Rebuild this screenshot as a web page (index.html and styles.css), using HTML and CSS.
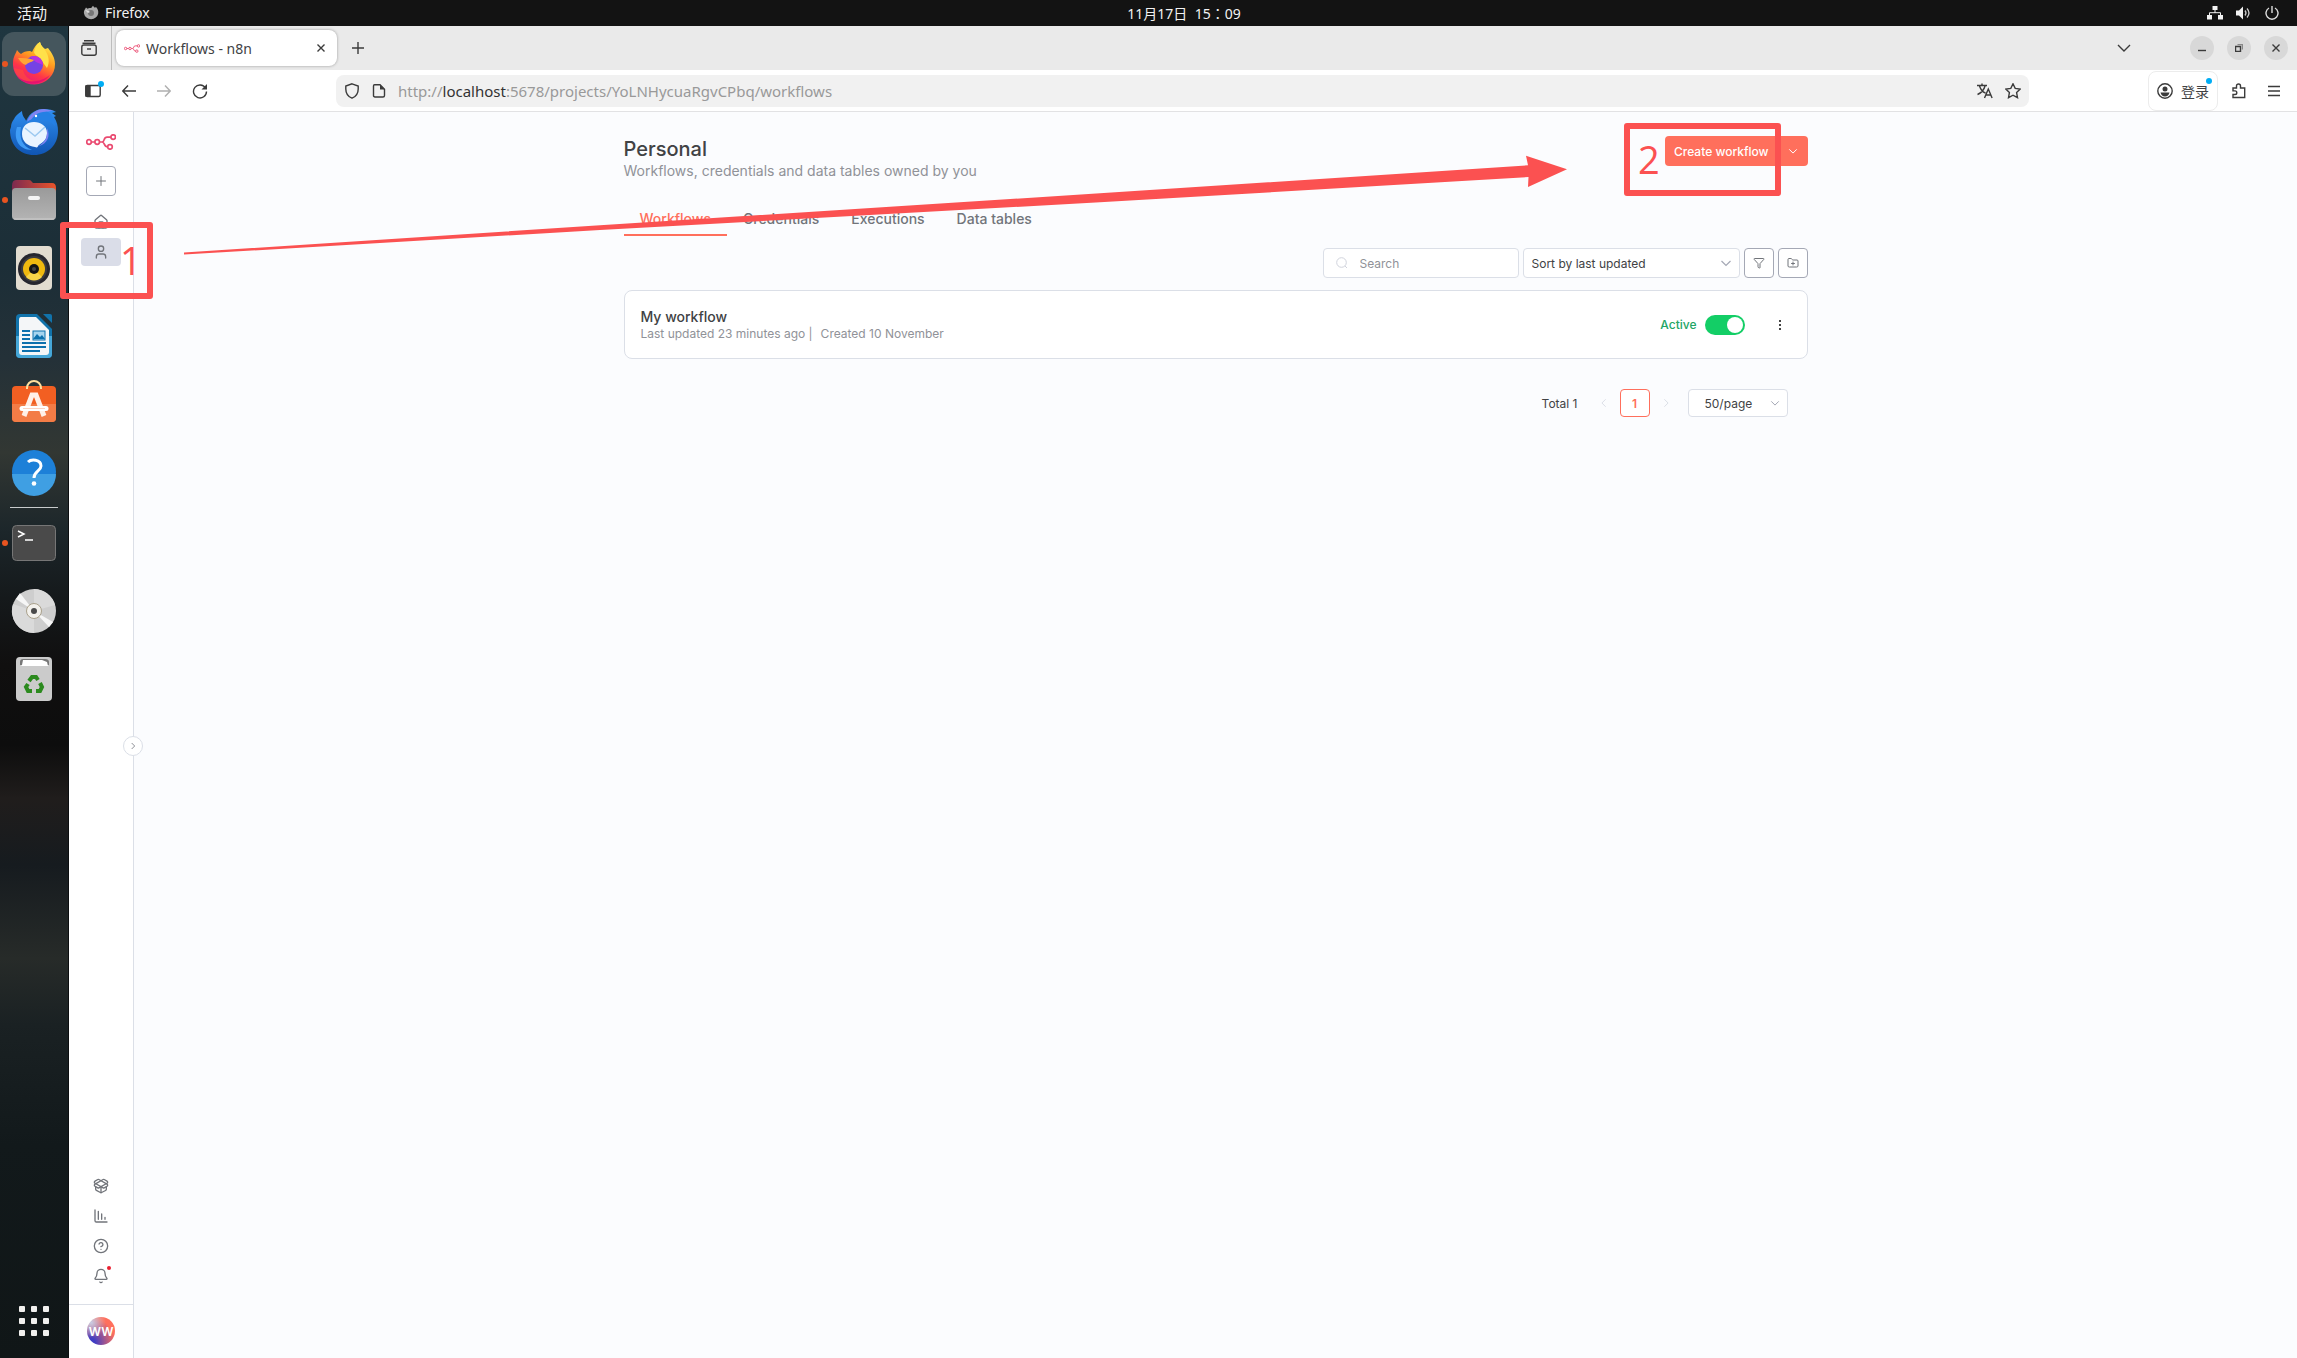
FILE: index.html
```html
<!DOCTYPE html>
<html lang="en">
<head>
    <meta charset="UTF-8">
    <meta name="viewport" content="width=device-width, initial-scale=1.0">
    <title>Workflows - n8n</title>
    <link rel="stylesheet" href="styles.css">
</head>
<body>
    <!-- Shared shapes -->
    <svg class="defs" width="0" height="0" aria-hidden="true">
        <symbol id="n8n" viewBox="0 0 30 16">
            <g fill="none" stroke="#ea4b71" stroke-width="1.7">
                <circle cx="3" cy="8" r="2.3"/><circle cx="11.2" cy="8" r="2.3"/>
                <circle cx="27.2" cy="3.1" r="2.3"/><circle cx="24" cy="12.9" r="2.3"/>
                <path d="M5.3 8h3.6M13.5 8h2.6c3 0 1-4.9 5-4.9h3.8M16.1 8c3 0 1.4 4.9 5.6 4.9"/>
            </g>
        </symbol>
        <symbol id="chevron" viewBox="0 0 24 24">
            <path d="m3 8 9 9 9-9" fill="none" stroke="currentColor" stroke-width="2.4"/>
        </symbol>
        <linearGradient id="fox" x1="0.8" y1="0" x2="0.3" y2="1">
            <stop offset="0" stop-color="#fff44f"/><stop offset="0.4" stop-color="#ff9a1f"/>
            <stop offset="0.7" stop-color="#ff3647"/><stop offset="1" stop-color="#e31587"/>
        </linearGradient>
        <linearGradient id="bird" x1="0" y1="0" x2="0" y2="1">
            <stop offset="0" stop-color="#2f8ff0"/><stop offset="1" stop-color="#1055b3"/>
        </linearGradient>
        <linearGradient id="steel" x1="0" y1="0" x2="0" y2="1">
            <stop offset="0" stop-color="#9a9a9a"/><stop offset="1" stop-color="#b4b4b4"/>
        </linearGradient>
        <linearGradient id="folder" x1="0" y1="0" x2="1" y2="0">
            <stop offset="0" stop-color="#7c2a50"/><stop offset="1" stop-color="#e9542a"/>
        </linearGradient>
    </svg>

    <header class="topbar">
        <div class="topbar-left">
            <span class="activities">活动</span>
            <span class="app-name">
                <svg width="16" height="16" viewBox="0 0 16 16"><path d="M1.5 5 3 2.5l1.5 1.3C6 3 7.500 3 8.200 3L10 .8l1.300 1.700 2-.3C15 4 15.500 6 15.200 8.500a7.200 6.800 0 0 1-14.200 0C.8 7 1 6 1.500 5z" fill="#aaa"/><circle cx="8" cy="8" r="3" fill="#777"/><path d="M2 5c2 0 4 1 5 2L5 8z" fill="#ddd"/></svg>
                Firefox
            </span>
        </div>
        <time class="clock">11月17日&nbsp; 15：09</time>
        <div class="topbar-right">
            <svg width="16" height="14" viewBox="0 0 16 14"><path d="M5.500 0h5v4h-5zM0 9h5v4.500H0zM11 9h5v4.500h-5z" fill="#f2f2f2"/><path d="M8 4v3M2.500 9V6.700h11V9" fill="none" stroke="#f2f2f2"/></svg>
            <svg width="16" height="14" viewBox="0 0 16 14"><path d="M0 4.500h3L7 .5v13L3 9.500H0z" fill="#f2f2f2"/><path d="M9 4.500q2 2.500 0 5M11 2.500q4 4.500 0 9" fill="none" stroke="#ccc" stroke-width="1.300"/></svg>
            <svg width="14" height="14" viewBox="0 0 14 14"><path d="M7 0v7M4 2a6 6 0 1 0 6 0" fill="none" stroke="#ddd" stroke-width="1.400"/></svg>
        </div>
    </header>

    <div class="desktop">
        <nav class="dock" aria-label="Dock">
            <button class="dock-item focused running" aria-label="Firefox">
                <svg width="48" height="48" viewBox="0 0 48 48">
                    <path d="M4 17c1-3 2-4 3-7 1 1 2 3 4 4 2-2 5-3 9-3l2 1c2-4 4-8 8-10 1 4 3 5 5 7l3-1c4 5 7 10 7 16a21 20 0 0 1-42 1c0-3 0-6 1-8z" fill="url(#fox)"/>
                    <path d="M30 2c1 4 3 5 5 8 4 6 5 12 2 18l-6-8c-3-5-6-4-7-8 1-4 3-8 6-10z" fill="#ffe14a"/>
                    <circle cx="24" cy="25" r="9" fill="#7542e5"/><path d="M20 17c6-3 13 1 13 8l-7-3z" fill="#b833e1"/>
                    <path d="M8 18c5 0 10 0 16 2-3 3-6 2-8 5-4-1-6-4-8-7z" fill="#ffa436"/>
                    <path d="M4 28c2 11 13 16 24 13-7 0-13-3-15-11z" fill="#ff4a3a" opacity=".7"/>
                    <path d="M7 37c9 9 25 9 33-2-7 6-21 10-33 2z" fill="#e5126f"/>
                </svg>
            </button>
            <button class="dock-item" aria-label="Thunderbird">
                <svg width="48" height="48" viewBox="0 0 48 48">
                    <path d="M1 19c0-3 1-5 3-8 1-3 4-5 8-8 0 6 4 8 4 10C20 4 27 1 34 1c5 0 9 1 12 3l-4 1 4 3-2 1c3 5 4 9 4 14 0 14-10 24-24 24S0 37 0 22z" fill="url(#bird)"/>
                    <path d="M17 14C20 5 27 1 34 1l10 2c-8 0-13 2-16 6-4 2-8 2-11 5z" fill="#7f83f2"/>
                    <path d="M20 14c3-7 10-11 18-10 4 2 7 8 7 14-5-6-15-8-25-4z" fill="#2480e4"/>
                    <path d="M7 19C3 31 9 42 22 42 12 38 9 30 11 19z" fill="#3f9cf6"/>
                    <path d="M12 26c0-8 5-12 12-12s13 4 13 11c0 9-7 10-9 13 0 1-1 2-3 1-7-1-13-5-13-13z" fill="#e9f4ff"/>
                    <path d="m15 20 10 8 10-9" fill="none" stroke="#9cc9f0" stroke-width="1.500"/><circle cx="26" cy="8" r="1.200" fill="#fff"/>
                    <path d="M37 20c4 8 0 16-8 18l-3 1c9-3 12-10 11-19z" fill="#7f83f2"/>
                </svg>
            </button>
            <button class="dock-item running" aria-label="Files">
                <svg width="48" height="48" viewBox="0 0 48 48">
                    <path d="M2 10q0-6 4-6h13q2 0 3 2l1 1h19q4 0 4 5v14H2z" fill="url(#folder)"/>
                    <rect x="2" y="12" width="44" height="32" rx="4" fill="url(#steel)"/>
                    <path d="M4 43h40" stroke="#ccc"/><rect x="18" y="20" width="12" height="4" rx="2" fill="#f4f4f4"/>
                </svg>
            </button>
            <button class="dock-item" aria-label="Rhythmbox">
                <svg width="48" height="48" viewBox="0 0 48 48">
                    <rect x="6" y="2" width="36" height="44" rx="4" fill="#e2dcd0"/>
                    <circle cx="24" cy="25" r="16" fill="#26262e"/><circle cx="24" cy="25" r="13" fill="#3b3b40"/>
                    <circle cx="24" cy="25" r="11" fill="#f0b90f"/><path d="M24 25 16 33a11 11 0 0 0 16 0z" fill="#f8d548"/>
                    <circle cx="24" cy="25" r="5" fill="#141414"/><circle cx="24" cy="25" r="2" fill="#444"/>
                </svg>
            </button>
            <button class="dock-item" aria-label="LibreOffice Writer">
                <svg width="48" height="48" viewBox="0 0 48 48">
                    <path d="M10 2h17l15 15v25q0 4-4 4H10q-4 0-4-4V6q0-4 4-4z" fill="#1173ab"/><path d="M6 24h36v18q0 4-4 4H10q-4 0-4-4z" fill="#46a7d8"/>
                    <path d="M33 2h7q2 0 2 2v7z" fill="#1173ab"/>
                    <path d="M11 5h15l13 13v22q0 3-3 3H12q-3 0-3-3V8q0-3 2-3z" fill="#f4f6f8"/>
                    <path d="M12 19h8M12 23h8M12 27h8M12 31h24M12 35h24M12 39h18" stroke="#0c70ad" stroke-width="2"/>
                    <rect x="23" y="19" width="12" height="9" fill="#a6d4ef" stroke="#0c70ad"/><path d="m23 27 4-5 3 3 2-2 3 4z" fill="#0c70ad"/>
                </svg>
            </button>
            <button class="dock-item" aria-label="App Center">
                <svg width="48" height="48" viewBox="0 0 48 48">
                    <rect x="2" y="6" width="44" height="36" rx="4" fill="#f25f22"/><path d="M2 24h44v14q0 4-4 4H6q-4 0-4-4z" fill="#f37c46"/>
                    <path d="M17 9V8a7 7 0 0 1 14 0v1" fill="none" stroke="#ffdf9e" stroke-width="2"/>
                    <path d="m14 36 8-21h4l8 21" fill="none" stroke="#fff0e8" stroke-width="5"/><path d="M12 28.500h24" stroke="#fff" stroke-width="5" stroke-linecap="round"/><path d="M13 28.500h22" stroke="#fbd3c2"/>
                </svg>
            </button>
            <button class="dock-item" aria-label="Help">
                <svg width="48" height="48" viewBox="0 0 48 48">
                    <circle cx="24" cy="24" r="22" fill="#1d80d8"/><path d="M2 26a22 22 0 0 0 44 0z" fill="#3f9fe3"/>
                    <path d="M18 14c3-3 13-3 13 4 0 5-7 5-7 12" fill="none" stroke="#fff" stroke-width="3"/><circle cx="24" cy="35.500" r="2.300" fill="#fff"/>
                </svg>
            </button>
            <hr class="dock-line">
            <button class="dock-item running" aria-label="Terminal">
                <svg width="48" height="48" viewBox="0 0 48 48">
                    <rect x="2.500" y="6.500" width="43" height="35" rx="4" fill="#4a4a4a" stroke="#767676"/>
                    <path d="m8 12 6 3-6 3M15 21h8" fill="none" stroke="#fff" stroke-width="1.500"/>
                </svg>
            </button>
            <button class="dock-item" aria-label="Disc">
                <svg width="48" height="48" viewBox="0 0 48 48">
                    <circle cx="24" cy="24" r="22" fill="#cecece"/>
                    <path d="M24 24 3 17A22 22 0 0 0 24 46zM24 24l21-6A22 22 0 0 0 24 2z" fill="#dadada"/>
                    <path d="m24 24-18-12 4-6zM24 24l19 11-4 5z" fill="#f6f6f6"/>
                    <circle cx="24" cy="24" r="7.500" fill="#f3f1ec" stroke="#aaa18c"/><circle cx="24" cy="24" r="3" fill="#4a4a4a"/>
                </svg>
            </button>
            <button class="dock-item" aria-label="Trash">
                <svg width="48" height="48" viewBox="0 0 48 48">
                    <rect x="6" y="2" width="36" height="44" rx="4" fill="#cbcbcb"/>
                    <path d="M10 10V7q0-3 3-3h22q4 0 4 3v3z" fill="#777"/><path d="m12 10 1-5h19l5 2 1 4H11z" fill="#fff"/>
                    <g fill="none" stroke="#2b8a1e" stroke-width="4"><path d="m19 26 3-4h4l2 3"/><path d="m30 28 2 4-2 4h-4"/><path d="M22 36h-4l-2-4 2-3"/></g>
                </svg>
            </button>
            <button class="apps-grid" aria-label="Show applications">
                <svg width="30" height="30" viewBox="0 0 30 30" fill="#f1f0ee">
                    <rect width="6" height="6" rx="1"/><rect x="12" width="6" height="6" rx="1"/><rect x="24" width="6" height="6" rx="1"/>
                    <rect y="12" width="6" height="6" rx="1"/><rect x="12" y="12" width="6" height="6" rx="1"/><rect x="24" y="12" width="6" height="6" rx="1"/>
                    <rect y="24" width="6" height="6" rx="1"/><rect x="12" y="24" width="6" height="6" rx="1"/><rect x="24" y="24" width="6" height="6" rx="1"/>
                </svg>
            </button>
        </nav>

        <div class="browser">
            <div class="tabbar">
                <button class="tab-overview" aria-label="Recent browsing">
                    <svg class="ico" width="16" height="16" viewBox="0 0 16 16"><path d="M3 .8h10M1.500 3.200h13" /><rect x=".8" y="5" width="14.400" height="10.200" rx="2"/><path d="M6 9h4"/></svg>
                </button>
                <div class="tab">
                    <svg width="16" height="9"><use href="#n8n"/></svg>
                    <span class="tab-title">Workflows - n8n</span>
                    <button class="tab-close" aria-label="Close tab"><svg class="ico" width="8" height="8" viewBox="0 0 8 8"><path d="m.5.5 7 7M7.500.5l-7 7"/></svg></button>
                </div>
                <button class="new-tab" aria-label="New tab"><svg class="ico" width="12" height="12" viewBox="0 0 12 12"><path d="M6 0v12M0 6h12"/></svg></button>
                <div class="window-buttons">
                    <button class="all-tabs" aria-label="List all tabs"><svg class="ico" width="14" height="14" viewBox="0 0 14 14"><path d="m1 4 6 6 6-6"/></svg></button>
                    <button class="round" aria-label="Minimize"><svg class="ico" width="8" height="8" viewBox="0 0 8 8"><path d="M0 6.500h8"/></svg></button>
                    <button class="round" aria-label="Restore"><svg class="ico" width="8" height="8" viewBox="0 0 8 8"><path d="M.5 2.500h5v5h-5z"/><path d="M2.500.5h5v5" stroke="#888"/></svg></button>
                    <button class="round" aria-label="Close"><svg class="ico" width="8" height="8" viewBox="0 0 8 8"><path d="m.5.5 7 7M7.500.5l-7 7"/></svg></button>
                </div>
            </div>

            <div class="navbar">
                <div class="nav-buttons">
                    <button class="dotted" aria-label="Sidebar"><svg class="ico" width="16" height="14" viewBox="0 0 16 14"><rect x=".8" y="1.500" width="14.400" height="11" rx="1.500"/><path d="M1 2h4v10H1z" fill="#3b3b3b"/></svg></button>
                    <button aria-label="Back"><svg class="ico" width="14" height="12" viewBox="0 0 14 12"><path d="M6 .5.800 6 6 11.500M1 6h13"/></svg></button>
                    <button class="disabled" aria-label="Forward"><svg class="ico" width="14" height="12" viewBox="0 0 14 12"><path d="M8 .5 13.200 6 8 11.500M13 6H0"/></svg></button>
                    <button aria-label="Reload"><svg class="ico" width="16" height="16" viewBox="0 0 16 16"><path d="M13.500 5A6.500 6.500 0 1 0 14.500 8.500"/><path d="M15 1v5.500H9.500z" fill="#3b3b3b" stroke="none"/></svg></button>
                </div>
                <div class="urlbar">
                    <svg class="ico" width="16" height="16" viewBox="0 0 16 16"><path d="M8 .8 14.200 3v3c0 4-2 7.500-6.200 9.200C3.800 13.500 1.800 10 1.800 6V3z"/></svg>
                    <svg class="ico" width="14" height="16" viewBox="0 0 14 16"><path d="M2.500 1.800H8l4.500 4.500v6.200q0 1.500-1.500 1.500H3q-1.500 0-1.500-1.500V3q0-1.200 1-1.200z"/><path d="M8 1.500v5h5z" fill="#3b3b3b" stroke="none"/></svg>
                    <span class="url">http://<b>localhost</b>:5678/projects/YoLNHycuaRgvCPbq/workflows</span>
                    <button aria-label="Translate"><svg class="ico" width="16" height="16" viewBox="0 0 16 16"><path d="M0 2.500h10M5 .5v2M2.500 3c1 3 3 6 6 7M8 3C7 7 4 10 .5 11.500M7.500 15l3.800-9 3.800 9M9 12h5"/></svg></button>
                    <button aria-label="Bookmark"><svg class="ico" width="16" height="16" viewBox="0 0 16 16"><path d="m8 .8 2.200 4.600 5 .7-3.600 3.500.9 5L8 12.200l-4.500 2.400.9-5L.8 6.100l5-.7z"/></svg></button>
                </div>
                <div class="nav-end">
                    <button class="signin dotted"><svg class="ico" width="16" height="16" viewBox="0 0 16 16"><circle cx="8" cy="8" r="7.200"/><circle cx="8" cy="6" r="2.500" fill="#3b3b3b" stroke="none"/><path d="M3.500 9.500h9q-1 4-4.500 4t-4.500-4z" fill="#3b3b3b" stroke="none"/></svg>登录</button>
                    <button aria-label="Extensions"><svg class="ico" width="14" height="16" viewBox="0 0 14 16"><path d="M1 5h3.500V3a2 2 0 0 1 4 0v2h4.200v9.500H1V11.500h2a1.800 1.800 0 0 0 0-3.600H1z"/></svg></button>
                    <button aria-label="Menu"><svg class="ico" width="12" height="12" viewBox="0 0 12 12"><path d="M0 1.500h12M0 6h12M0 10.500h12"/></svg></button>
                </div>
            </div>

            <div class="app">
                <aside class="sidebar">
                    <a class="logo" href="#" aria-label="n8n"><svg width="30" height="16"><use href="#n8n"/></svg></a>
                    <button class="add" aria-label="Create"><svg class="lucide" width="12" height="12" viewBox="0 0 24 24"><path d="M12 3v18M3 12h18"/></svg></button>
                    <nav class="menu">
                        <a class="menu-item" href="#" aria-label="Overview"><svg class="lucide" width="16" height="16" viewBox="0 0 24 24"><path d="M15 21v-8a1 1 0 0 0-1-1h-4a1 1 0 0 0-1 1v8"/><path d="M3 10a2 2 0 0 1 .709-1.528l7-5.999a2 2 0 0 1 2.582 0l7 5.999A2 2 0 0 1 21 10v9a2 2 0 0 1-2 2H5a2 2 0 0 1-2-2z"/></svg></a>
                        <a class="menu-item selected" href="#" aria-label="Personal"><svg class="lucide" width="16" height="16" viewBox="0 0 24 24"><path d="M19 21v-2a4 4 0 0 0-4-4H9a4 4 0 0 0-4 4v2"/><circle cx="12" cy="7" r="4"/></svg></a>
                    </nav>
                    <nav class="menu menu-bottom">
                        <a class="menu-item" href="#" aria-label="Templates"><svg class="lucide" width="16" height="16" viewBox="0 0 24 24"><path d="M12 22v-9"/><path d="M15.170 2.210a1.670 1.670 0 0 1 1.630 0L21 4.570a1.930 1.930 0 0 1 0 3.360L8.820 14.790a1.655 1.655 0 0 1-1.640 0L3 12.430a1.930 1.930 0 0 1 0-3.360z"/><path d="M20 13v3.870a2.060 2.060 0 0 1-1.110 1.830l-6 3.080a1.930 1.930 0 0 1-1.780 0l-6-3.080A2.060 2.060 0 0 1 4 16.870V13"/><path d="M21 12.430a1.930 1.930 0 0 0 0-3.360L8.830 2.200a1.640 1.640 0 0 0-1.630 0L3 4.570a1.930 1.930 0 0 0 0 3.360l12.180 6.860a1.636 1.636 0 0 0 1.630 0z"/></svg></a>
                        <a class="menu-item" href="#" aria-label="Insights"><svg class="lucide" width="16" height="16" viewBox="0 0 24 24"><path d="M13 17V9M18 17v-3M3 3v16a2 2 0 0 0 2 2h16M8 17V5"/></svg></a>
                        <a class="menu-item" href="#" aria-label="Help"><svg class="lucide" width="16" height="16" viewBox="0 0 24 24"><circle cx="12" cy="12" r="10"/><path d="M9.090 9a3 3 0 0 1 5.830 1c0 2-3 3-3 3M12 17h.01"/></svg></a>
                        <a class="menu-item news" href="#" aria-label="What's new"><svg class="lucide" width="16" height="16" viewBox="0 0 24 24"><path d="M10.268 21a2 2 0 0 0 3.464 0"/><path d="M3.262 15.326A1 1 0 0 0 4 17h16a1 1 0 0 0 .74-1.673C19.410 13.956 18 12.499 18 8A6 6 0 0 0 6 8c0 4.499-1.411 5.956-2.738 7.326"/></svg></a>
                    </nav>
                    <div class="user"><span class="avatar">WW</span></div>
                    <button class="collapse" aria-label="Expand sidebar"><svg width="8" height="8"><use href="#chevron"/></svg></button>
                </aside>

                <main class="main">
                    <div class="page">
                        <div class="page-head">
                            <div>
                                <h1>Personal</h1>
                                <p class="subtitle">Workflows, credentials and data tables owned by you</p>
                            </div>
                            <div class="create">
                                <button class="create-main">Create workflow</button>
                                <button class="create-more" aria-label="More options"><svg width="10" height="10"><use href="#chevron"/></svg></button>
                            </div>
                        </div>

                        <nav class="tabs">
                            <a class="active" href="#">Workflows</a>
                            <a href="#">Credentials</a>
                            <a href="#">Executions</a>
                            <a href="#">Data tables</a>
                        </nav>

                        <div class="filters">
                            <label class="search">
                                <svg width="12" height="12" viewBox="0 0 12 12" fill="none" stroke="#d0d3dc"><circle cx="5.500" cy="5.500" r="4.800"/><path d="m9 9 2 2"/></svg>
                                <input type="text" placeholder="Search" aria-label="Search">
                            </label>
                            <div class="select sort">
                                <select aria-label="Sort"><option>Sort by last updated</option></select>
                                <svg width="12" height="12"><use href="#chevron"/></svg>
                            </div>
                            <button class="square" aria-label="Filter"><svg class="lucide" width="12" height="12" viewBox="0 0 24 24"><path d="M10 20a1 1 0 0 0 .553.895l2 1A1 1 0 0 0 14 21v-7a2 2 0 0 1 .517-1.341L21.740 4.670A1 1 0 0 0 21 3H3a1 1 0 0 0-.742 1.670l7.225 7.989A2 2 0 0 1 10 14z"/></svg></button>
                            <button class="square" aria-label="Add folder"><svg class="lucide" width="12" height="12" viewBox="0 0 24 24"><path d="M12 10v6M9 13h6"/><path d="M20 20a2 2 0 0 0 2-2V8a2 2 0 0 0-2-2h-7.900a2 2 0 0 1-1.690-.9L9.600 3.900A2 2 0 0 0 7.930 3H4a2 2 0 0 0-2 2v13a2 2 0 0 0 2 2Z"/></svg></button>
                        </div>

                        <article class="card">
                            <div class="card-text">
                                <h2>My workflow</h2>
                                <p><span class="updated">Last updated 23 minutes ago |</span><span>Created 10 November</span></p>
                            </div>
                            <label class="status" for="wfActive">Active</label>
                            <input class="switch" type="checkbox" id="wfActive" checked>
                            <button class="more" aria-label="Workflow actions"><svg width="12" height="12" viewBox="0 0 12 12" fill="#444"><rect x="5" y="1" width="2" height="2"/><rect x="5" y="5" width="2" height="2"/><rect x="5" y="9" width="2" height="2"/></svg></button>
                        </article>

                        <div class="pagination">
                            <span class="total">Total 1</span>
                            <button class="step prev" aria-label="Previous"><svg width="10" height="10"><use href="#chevron"/></svg></button>
                            <button class="page-number">1</button>
                            <button class="step next" aria-label="Next"><svg width="10" height="10"><use href="#chevron"/></svg></button>
                            <div class="select size">
                                <select aria-label="Page size"><option>50/page</option></select>
                                <svg width="10" height="10"><use href="#chevron"/></svg>
                            </div>
                        </div>
                    </div>
                </main>
            </div>
        </div>
    </div>

    <!-- Step markers drawn over the desktop -->
    <div class="mark mark-one"><span>1</span></div>
    <div class="mark mark-two"><span>2</span></div>
    <svg class="arrow" width="1384" height="102" viewBox="184 153 1384 102"><path d="m184 252.500 416-27.200L1100 193.300l428-28-2-9.600 41 13.600-39 17.700.5-10L1100 202.300 600 230 184 254.500z" fill="#fb5151"/></svg>
</body>
</html>
```
FILE: styles.css
```css
* {
    box-sizing: border-box;
}

body {
    margin: 0;
    height: 100vh;
    display: flex;
    flex-direction: column;
    position: relative;
    overflow: hidden;
    font-family: Inter, "Noto Sans CJK SC", sans-serif;
    font-size: 12px;
    color: #414244;
}

button,
input,
select {
    font: inherit;
    color: inherit;
    margin: 0;
    padding: 0;
    border: none;
    background: none;
}

a {
    color: inherit;
    text-decoration: none;
}

svg {
    display: block;
    flex: none;
}

.defs {
    position: absolute;
}

.ico {
    fill: none;
    stroke: #3b3b3b;
    stroke-width: 1.4;
}

.lucide {
    fill: none;
    stroke: #71747a;
    stroke-width: 2;
    stroke-linecap: round;
    stroke-linejoin: round;
}

/* GNOME top bar */
.topbar {
    height: 26px;
    flex: none;
    display: grid;
    grid-template-columns: 1fr auto 1fr;
    align-items: center;
    padding: 0 18px 0 17px;
    background: #131313;
    color: #f2f2f2;
    font: 15px/26px "Noto Sans", "Noto Sans CJK SC", sans-serif;
}

.topbar-left,
.topbar-right,
.app-name {
    display: flex;
    align-items: center;
}

.activities {
    width: 66px;
}

.app-name {
    gap: 6px;
    font-size: 14px;
}

.clock {
    padding: 2px 0 0 72px;
    font: 14px/24px "Noto Sans", "Noto Sans CJK TC", sans-serif;
}

.topbar-right {
    justify-content: flex-end;
    gap: 13px;
}

.desktop {
    flex: 1;
    min-height: 0;
    display: flex;
}

/* Dock */
.dock {
    width: 69px;
    flex: none;
    display: flex;
    flex-direction: column;
    align-items: center;
    gap: 4px;
    padding: 6px 3px 22px 2px;
    border-right: 1px solid #0c0e10;
    background: linear-gradient(#1f3640 0%, #1c2e37 18%, #243138 25%, #323733 32%, #1c262a 38%, #15191b 43%, #100f0f 48%, #0d0d0d 54%, #201d1c 58%, #161b1f 63%, #272b29 70%, #1a2123 75%, #12191b 84%, #101617 100%);
}

.dock-item {
    width: 64px;
    height: 64px;
    flex: none;
    display: flex;
    align-items: center;
    justify-content: center;
    position: relative;
    border-radius: 12px;
}

.dock-item.focused {
    background: #45565d;
}

.dock-item.running::before {
    content: "";
    position: absolute;
    left: 0;
    top: 29px;
    width: 6px;
    height: 6px;
    border-radius: 50%;
    background: #e95420;
}

.dock-line {
    width: 48px;
    height: 1px;
    flex: none;
    margin: -1px 0;
    border: none;
    background: #c8cbcc;
}

.apps-grid {
    margin-top: auto;
}

/* Firefox window */
.browser {
    flex: 1;
    min-width: 0;
    display: flex;
    flex-direction: column;
    background: #fff;
    font-family: "Noto Sans", "Noto Sans CJK SC", sans-serif;
}

.tabbar {
    height: 44px;
    flex: none;
    display: flex;
    align-items: center;
    padding-right: 9px;
    background: #eaeaea;
}

.tab-overview {
    width: 43px;
    height: 44px;
    display: grid;
    place-items: center;
    padding-right: 3px;
    border-right: 1px solid #bdbdbd;
}

.tab {
    width: 221px;
    height: 36px;
    display: flex;
    align-items: center;
    gap: 6px;
    margin: 0 15px 0 4px;
    padding: 0 12px 0 8px;
    border-radius: 8px;
    background: #fff;
    box-shadow: 0 0 3px rgba(0, 0, 0, 0.35);
    font-size: 14px;
}

.tab-title {
    flex: 1;
}

.window-buttons {
    margin-left: auto;
    display: flex;
    align-items: center;
    gap: 13px;
}

.all-tabs {
    margin-right: 46px;
}

.round {
    width: 24px;
    height: 24px;
    display: grid;
    place-items: center;
    border-radius: 50%;
    background: #d8d8d8;
}

.navbar {
    height: 42px;
    flex: none;
    display: flex;
    align-items: center;
    border-bottom: 1px solid #e2e2e4;
}

.nav-buttons {
    width: 267px;
    display: flex;
    align-items: center;
    gap: 21px;
    padding-left: 16px;
}

.disabled {
    opacity: 0.4;
}

.dotted {
    position: relative;
}

.dotted::after {
    content: "";
    position: absolute;
    right: -3px;
    top: -3px;
    width: 6px;
    height: 6px;
    border-radius: 50%;
    background: #00adf5;
}

.urlbar {
    flex: 1;
    height: 32px;
    display: flex;
    align-items: center;
    gap: 12px;
    padding: 0 8px;
    border-radius: 8px;
    background: #f1f1f1;
    font-size: 15px;
    color: #999;
}

.url {
    flex: 1;
}

.url b {
    font-weight: 400;
    color: #333;
}

.nav-end {
    display: flex;
    align-items: center;
    gap: 14px;
    margin-left: 119px;
    padding-right: 17px;
}

.nav-end button:last-child {
    margin-left: 8px;
}

.signin {
    height: 40px;
    display: flex;
    align-items: center;
    gap: 8px;
    padding: 0 8px;
    border: 1px solid #ececec;
    border-radius: 8px;
    font-size: 14px;
}

.signin::after {
    right: 5px;
    top: 6px;
}

/* n8n */
.app {
    flex: 1;
    min-height: 0;
    display: flex;
    font-family: Inter, sans-serif;
}

.sidebar {
    width: 65px;
    flex: none;
    display: flex;
    flex-direction: column;
    align-items: center;
    position: relative;
    border-right: 1px solid #dbdfe7;
    background: #fff;
}

.logo {
    margin: 22px 0 16px;
}

.add,
.square {
    width: 30px;
    height: 30px;
    display: grid;
    place-items: center;
    border: 1px solid #a4a8b5;
    border-radius: 4px;
    background: #fff;
}

.menu {
    display: flex;
    flex-direction: column;
    gap: 2px;
    margin-top: 12px;
}

.menu-item {
    width: 40px;
    height: 28px;
    display: grid;
    place-items: center;
    position: relative;
    border-radius: 4px;
}

.menu-item.selected {
    background: #dadde8;
}

.menu-bottom {
    margin: auto 0 14px;
}

.news::after {
    content: "";
    position: absolute;
    right: 10px;
    top: 4px;
    width: 4px;
    height: 4px;
    border-radius: 50%;
    background: #ea1f30;
}

.user {
    width: 100%;
    padding: 12px 0 13px;
    display: flex;
    justify-content: center;
    border-top: 1px solid #dbdfe7;
}

.avatar {
    width: 28px;
    height: 28px;
    display: grid;
    place-items: center;
    border-radius: 50%;
    background: radial-gradient(circle at 15% 20%, #c9cde4 0, rgba(201, 205, 228, 0) 45%), radial-gradient(circle at 15% 90%, #3f3dc4 10%, #ff6f5c 70%);
    color: #fff;
    font-weight: 600;
}

.collapse {
    position: absolute;
    right: -10px;
    top: 624px;
    width: 20px;
    height: 20px;
    display: grid;
    place-items: center;
    border: 1px solid #dbdfe7;
    border-radius: 50%;
    background: #fff;
    color: #71747a;
}

.collapse svg,
.next svg {
    transform: rotate(-90deg);
}

.prev svg {
    transform: rotate(90deg);
}

.main {
    flex: 1;
    min-width: 0;
    background: #fbfcfe;
}

.page {
    max-width: 1280px;
    margin: 0 auto;
    padding: 24px 48px;
}

.page-head {
    display: flex;
    justify-content: space-between;
    align-items: flex-start;
}

h1,
h2,
p {
    margin: 0;
}

h1 {
    font-size: 20px;
    line-height: 26px;
    font-weight: 500;
}

.subtitle {
    font-size: 14px;
    line-height: 18px;
    color: #909298;
}

.create {
    display: flex;
    height: 30px;
    border-radius: 4px;
    overflow: hidden;
    background: #ff6f5c;
    color: #fff;
    font-weight: 500;
}

.create-main {
    padding: 0 9px;
}

.create-more {
    width: 30px;
    display: grid;
    place-items: center;
}

.tabs {
    display: flex;
    margin-top: 16px;
    font-size: 14px;
    line-height: 20px;
    font-weight: 500;
    color: #71747a;
}

.tabs a {
    padding: 13px 16px 5px;
    border-bottom: 2px solid transparent;
}

.tabs .active {
    color: #ff6f5c;
    border-color: #ff6f5c;
}

.filters {
    display: flex;
    justify-content: flex-end;
    gap: 4px;
    margin: 12px 0;
}

.search {
    width: 196px;
    height: 30px;
    display: flex;
    align-items: center;
    gap: 12px;
    padding: 0 12px;
    border: 1px solid #dbdfe7;
    border-radius: 4px;
    background: #fff;
}

.search input {
    width: 100%;
    outline: none;
}

.search input::placeholder {
    color: #909298;
}

.select {
    position: relative;
    height: 30px;
}

.select select {
    appearance: none;
    width: 100%;
    height: 100%;
    padding: 0 8px;
    border: 1px solid #dbdfe7;
    border-radius: 4px;
    background: #fff;
}

.select svg {
    position: absolute;
    right: 8px;
    top: 9px;
    color: #a4a8b5;
    pointer-events: none;
}

.sort {
    width: 217px;
}

.card {
    display: flex;
    align-items: center;
    height: 69px;
    padding: 0 16px;
    border: 1px solid #dbdfe7;
    border-radius: 8px;
    background: #fff;
}

.card-text {
    flex: 1;
}

h2 {
    font-size: 14px;
    line-height: 18px;
    font-weight: 500;
}

.card p {
    line-height: 16px;
    color: #909298;
}

.updated {
    margin-right: 8px;
}

.status {
    margin-right: 8px;
    font-weight: 500;
    color: #22a565;
}

.switch {
    appearance: none;
    width: 40px;
    height: 20px;
    border-radius: 10px;
    background: #ccd0d9;
}

.switch::before {
    content: "";
    display: block;
    width: 16px;
    height: 16px;
    margin: 2px;
    border-radius: 50%;
    background: #fff;
}

.switch:checked {
    background: #13ce66;
}

.switch:checked::before {
    margin-left: 22px;
}

.more {
    margin: 0 5px 0 29px;
}

.pagination {
    display: flex;
    justify-content: flex-end;
    align-items: center;
    margin-top: 30px;
    padding-right: 20px;
}

.total {
    margin-right: 10px;
}

.step {
    width: 32px;
    height: 28px;
    display: grid;
    place-items: center;
    color: #dbdfe7;
}

.page-number {
    width: 30px;
    height: 28px;
    border: 1px solid #ff6f5c;
    border-radius: 4px;
    background: #fff;
    color: #ff6f5c;
    font-weight: 600;
}

.size {
    width: 100px;
    height: 28px;
    margin-left: 6px;
}

.size select {
    padding: 0 16px;
}

/* Step markers */
.mark {
    position: absolute;
    border: 6px solid #fb5151;
    border-radius: 3px;
    color: #fb5151;
    font: 38px/44px "Open Sans", sans-serif;
}

.mark span {
    position: absolute;
}

.mark-one {
    left: 60px;
    top: 222px;
    width: 93px;
    height: 77px;
}

.mark-one span {
    left: 54px;
    top: 10px;
}

.mark-two {
    left: 1624px;
    top: 123px;
    width: 157px;
    height: 73px;
}

.mark-two span {
    left: 8px;
    top: 8px;
}

.arrow {
    position: absolute;
    left: 184px;
    top: 153px;
}
```
